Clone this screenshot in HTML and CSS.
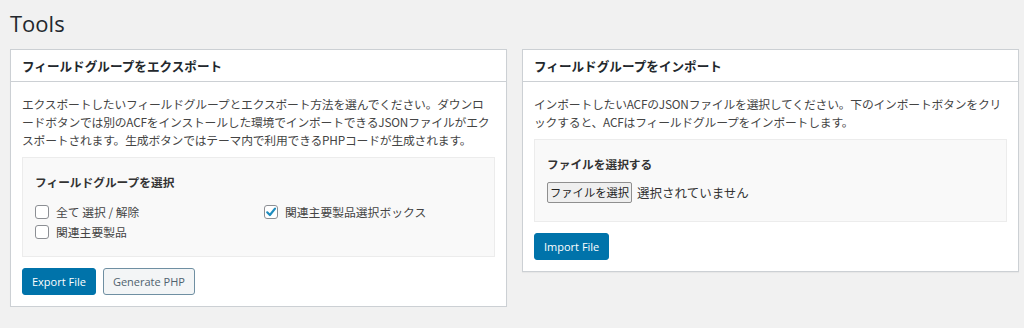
FILE: index.html
```html
<!DOCTYPE html>
<html lang="ja">
<head>
    <meta charset="UTF-8">
    <meta name="viewport" content="width=device-width, initial-scale=1.0">
    <title>Tools</title>
    <link rel="stylesheet" href="styles.css">
</head>
<body>

    <h1 class="page-title">Tools</h1>

    <div class="tools">
        <div class="postbox">
            <h2 class="postbox-title">フィールドグループをエクスポート</h2>
            <div class="postbox-inside">
                <p class="desc">エクスポートしたいフィールドグループとエクスポート方法を選んでください。ダウンロードボタンでは別のACFをインストールした環境でインポートできるJSONファイルがエクスポートされます。生成ボタンではテーマ内で利用できるPHPコードが生成されます。</p>

                <div class="field-box">
                    <div class="field-label">フィールドグループを選択</div>
                    <ul class="check-list">
                        <li><label><span class="check"></span>全て 選択 / 解除</label></li>
                        <li><label><span class="check"></span>関連主要製品</label></li>
                        <li><label><span class="check checked"><svg viewBox="0 0 14 14" width="14" height="14"><path d="M3.2 7.3 L5.9 10 L11 3.6" fill="none" stroke="#1e8cbe" stroke-width="2.2" stroke-linecap="round" stroke-linejoin="round"/></svg></span>関連主要製品選択ボックス</label></li>
                    </ul>
                </div>

                <div class="actions">
                    <button class="btn btn-primary" type="button">Export File</button>
                    <button class="btn btn-secondary" type="button">Generate PHP</button>
                </div>
            </div>
        </div>

        <div class="postbox">
            <h2 class="postbox-title">フィールドグループをインポート</h2>
            <div class="postbox-inside">
                <p class="desc">インポートしたいACFのJSONファイルを選択してください。下のインポートボタンをクリックすると、ACFはフィールドグループをインポートします。</p>

                <div class="field-box">
                    <div class="field-label">ファイルを選択する</div>
                    <div class="file-input">
                        <span class="file-btn">ファイルを選択</span>
                        <span class="file-name">選択されていません</span>
                    </div>
                </div>

                <div class="actions">
                    <button class="btn btn-primary" type="button">Import File</button>
                </div>
            </div>
        </div>
    </div>

</body>
</html>
```

FILE: styles.css
```css
body {
    margin: 0;
    padding: 0 5px 0 10px;
    background-color: #f1f1f1;
    color: #444;
    font-family: "Noto Sans CJK JP", sans-serif;
}
.page-title {
    margin: 0;
    padding: 9px 0 0;
    height: 40px;
    box-sizing: border-box;
    font-family: "Open Sans", "Noto Sans CJK JP", sans-serif;
    font-size: 22px;
    font-weight: 400;
    line-height: 29px;
    color: #23282d;
}
.tools {
    display: grid;
    grid-template-columns: 1fr 1fr;
    gap: 15px;
    align-items: start;
    margin-top: 9px;
}
.postbox {
    background: white;
    border: 1px solid #ccd0d4;
    box-shadow: 0 1px 1px rgba(0, 0, 0, 0.04);
}
.postbox-title {
    margin: 0;
    padding: 6px 11px;
    font-size: 12.6px;
    font-weight: 700;
    line-height: 19px;
    color: #23282d;
    border-bottom: 1px solid #ccd0d4;
}
.postbox-inside {
    padding: 13px 11px 11px;
}
.desc {
    margin: 0 0 8px;
    font-size: 11.8px;
    letter-spacing: -0.2px;
    line-height: 18px;
    line-break: loose;
}
.field-box {
    background: #f9f9f9;
    border: 1px solid #ececec;
    padding: 15px 12px 14px;
}
.field-label {
    font-size: 11.7px;
    font-weight: 700;
    line-height: 18px;
    color: #333;
}
.check-list {
    list-style: none;
    margin: 11px 0 0;
    padding: 0;
    display: grid;
    grid-template-columns: 229px 1fr;
    grid-template-rows: 20px 20px;
    grid-auto-flow: column;
}
.check-list label {
    display: flex;
    align-items: center;
    gap: 7px;
    font-size: 11.8px;
    line-height: 20px;
}
.check {
    display: inline-block;
    width: 14px;
    height: 14px;
    box-sizing: border-box;
    border: 1px solid #8c8f94;
    border-radius: 3px;
    background: white;
    position: relative;
}
.check svg {
    position: absolute;
    left: -1px;
    top: -1px;
}
.file-input {
    display: flex;
    align-items: center;
    gap: 5px;
    margin: 9px 0 4px;
}
.file-btn {
    display: inline-block;
    padding: 0 2px;
    height: 21px;
    line-height: 19px;
    box-sizing: border-box;
    border: 1px solid #8f8f8f;
    border-radius: 2px;
    background: #efefef;
    color: #222;
    font-size: 11.3px;
}
.file-name {
    color: #333;
    font-size: 12.5px;
}
.actions {
    display: flex;
    gap: 7px;
    margin-top: 11px;
}
.btn {
    height: 27px;
    padding: 0 9px;
    border-radius: 3px;
    font-family: "Open Sans", sans-serif;
    font-size: 11px;
    line-height: 25px;
    cursor: pointer;
}
.btn-primary {
    background: #0073aa;
    border: 1px solid #0073aa;
    color: white;
}
.btn-secondary {
    background: #f3f5f6;
    border: 1px solid #6f8fa2;
    color: #50626e;
}
```
